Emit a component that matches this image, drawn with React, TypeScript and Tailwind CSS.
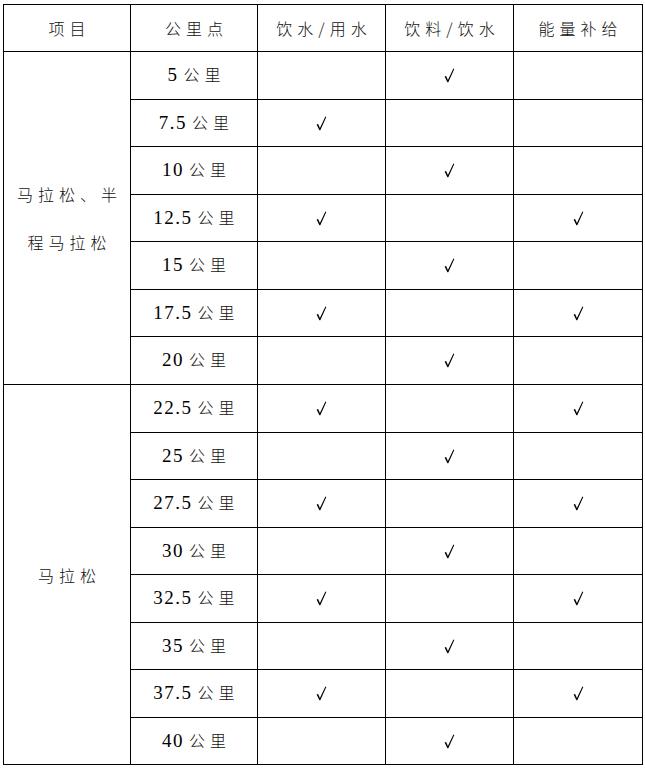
import React from "react";

type Row = { km: string; water?: boolean; drink?: boolean; energy?: boolean };

// rows for each station; heights alternate 48/47 to follow the reference grid
const rows: Row[] = [
  { km: "5", drink: true },
  { km: "7.5", water: true },
  { km: "10", drink: true },
  { km: "12.5", water: true, energy: true },
  { km: "15", drink: true },
  { km: "17.5", water: true, energy: true },
  { km: "20", drink: true },
  { km: "22.5", water: true, energy: true },
  { km: "25", drink: true },
  { km: "27.5", water: true, energy: true },
  { km: "30", drink: true },
  { km: "32.5", water: true, energy: true },
  { km: "35", drink: true },
  { km: "37.5", water: true, energy: true },
  { km: "40", drink: true },
];

const heights = [48, 47, 48, 47, 48, 47, 48, 48, 47, 48, 47, 48, 47, 48, 47];

function Check() {
  return (
    <svg width="11" height="15" viewBox="0 0 11 15" className="mx-auto block">
      <path d="M0.6 8.6 L2.1 7.9 L3.9 11.9 L9.4 0.6 L10.3 1.1 L4.3 14.2 L3.4 14.2 Z" fill="#000" />
    </svg>
  );
}

const cell =
  "border border-black text-center align-middle p-0 font-light text-[16px] tracking-[5px] [font-family:'Noto_Sans_CJK_SC',sans-serif] text-[#111]";
const num = "[font-family:'Liberation_Serif','Times_New_Roman',serif] font-normal text-[19px] tracking-[1.5px] text-black";

export default function App() {
  return (
    <div className="bg-white w-[645px] h-[771px] pt-[4px] pl-[3px] text-black">
      <table className="border-collapse table-fixed w-[639px]">
        <colgroup>
          <col className="w-[127px]" />
          <col className="w-[127px]" />
          <col className="w-[128px]" />
          <col className="w-[128px]" />
          <col className="w-[129px]" />
        </colgroup>
        <thead>
          <tr className="h-[47px]">
            <th className={`${cell} pl-[5px]`}>项目</th>
            <th className={`${cell} pl-[5px]`}>公里点</th>
            <th className={`${cell} pl-[5px]`}>饮水/用水</th>
            <th className={`${cell} pl-[5px]`}>饮料/饮水</th>
            <th className={`${cell} pl-[5px]`}>能量补给</th>
          </tr>
        </thead>
        <tbody>
          {rows.map((r, i) => (
            <tr key={r.km} style={{ height: heights[i] }}>
              {i === 0 && (
                <td rowSpan={7} className={`${cell} leading-[48px] pl-[5px]`}>
                  马拉松、半
                  <br />
                  程马拉松
                </td>
              )}
              {i === 7 && (
                <td rowSpan={8} className={`${cell} pl-[5px]`}>
                  马拉松
                </td>
              )}
              <td className={`${cell} pl-[5px]`}>
                <span className={num}>{r.km}</span>
                <span className="ml-[5px]">公里</span>
              </td>
              <td className={cell}>{r.water && <Check />}</td>
              <td className={cell}>{r.drink && <Check />}</td>
              <td className={cell}>{r.energy && <Check />}</td>
            </tr>
          ))}
        </tbody>
      </table>
    </div>
  );
}
